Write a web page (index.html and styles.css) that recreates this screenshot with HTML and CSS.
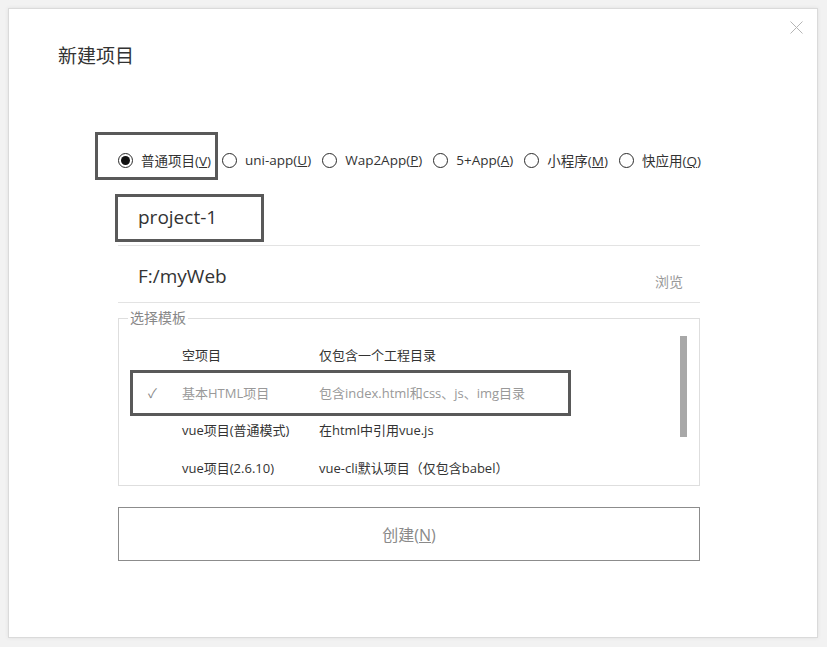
FILE: index.html
```html
<!DOCTYPE html>
<html lang="zh-CN">
<head>
  <meta charset="UTF-8">
  <meta name="viewport" content="width=device-width, initial-scale=1.0">
  <title>新建项目</title>
  <link rel="stylesheet" href="styles.css">
</head>
<body>
  <div class="dialog">
    <button class="close" type="button" aria-label="关闭">
      <svg width="13" height="13" viewBox="0 0 13 13">
        <path d="M0.5 0.5 L12.5 12.5 M12.5 0.5 L0.5 12.5" stroke="#b5b5b5" stroke-width="1" fill="none"/>
      </svg>
    </button>

    <h1 class="title">新建项目</h1>

    <div class="form">
      <div class="types">
        <label class="type marked"><span class="radio checked"></span><span>普通项目(<u>V</u>)</span></label>
        <label class="type"><span class="radio"></span><span>uni-app(<u>U</u>)</span></label>
        <label class="type"><span class="radio"></span><span>Wap2App(<u>P</u>)</span></label>
        <label class="type"><span class="radio"></span><span>5+App(<u>A</u>)</span></label>
        <label class="type"><span class="radio"></span><span>小程序(<u>M</u>)</span></label>
        <label class="type"><span class="radio"></span><span>快应用(<u>Q</u>)</span></label>
      </div>

      <div class="field name-field">
        <span class="field-value marked">project-1</span>
      </div>

      <div class="field path-field">
        <span class="field-value">F:/myWeb</span>
        <span class="browse">浏览</span>
      </div>

      <fieldset class="templates">
        <legend>选择模板</legend>
        <div class="template-body">
          <ul class="template-list">
            <li class="template">
              <span class="check"></span>
              <span class="tpl-name">空项目</span>
              <span class="tpl-desc">仅包含一个工程目录</span>
            </li>
            <li class="template selected marked">
              <span class="check">✓</span>
              <span class="tpl-name">基本HTML项目</span>
              <span class="tpl-desc">包含index.html和css、js、img目录</span>
            </li>
            <li class="template">
              <span class="check"></span>
              <span class="tpl-name">vue项目(普通模式)</span>
              <span class="tpl-desc">在html中引用vue.js</span>
            </li>
            <li class="template">
              <span class="check"></span>
              <span class="tpl-name">vue项目(2.6.10)</span>
              <span class="tpl-desc">vue-cli默认项目（仅包含babel）</span>
            </li>
          </ul>
          <div class="scrollbar"><div class="thumb"></div></div>
        </div>
      </fieldset>

      <button class="create" type="button">创建(<u>N</u>)</button>
    </div>
  </div>
</body>
</html>
```

FILE: styles.css
```css
*, *::before, *::after {
  box-sizing: border-box;
}
body {
  margin: 0;
  background-color: #f2f2f2;
  font-family: 'Open Sans', 'Noto Sans CJK SC', sans-serif;
  color: #333;
}
.dialog {
  position: relative;
  width: 810px;
  height: 630px;
  margin: 8px;
  background-color: #fff;
  border: 1px solid #dadada;
  box-shadow: 0 0 4px rgba(0, 0, 0, 0.08);
}
.close {
  position: absolute;
  top: 12px;
  right: 14px;
  width: 13px;
  height: 13px;
  padding: 0;
  border: none;
  background: none;
  line-height: 0;
}
.title {
  margin: 0;
  padding: 33px 0 0 49px;
  font-size: 19px;
  line-height: 28px;
  font-weight: 400;
  color: #333;
}
.form {
  width: 582px;
  margin-left: 109px;
}

/* marked boxes drawn over the content */
.marked {
  position: relative;
}
.marked::after {
  content: '';
  position: absolute;
  border: 3px solid #595959;
  pointer-events: none;
}

.types {
  display: flex;
  align-items: center;
  gap: 11px;
  margin-top: 80px;
  height: 20px;
  font-size: 13.5px;
}
.type {
  display: flex;
  align-items: center;
  gap: 8px;
  white-space: nowrap;
}
.type.marked::after {
  left: -23px;
  top: -18px;
  width: 123px;
  height: 48px;
}
.radio {
  width: 15px;
  height: 15px;
  border: 1px solid #2b2b2b;
  border-radius: 50%;
  display: flex;
  align-items: center;
  justify-content: center;
}
.radio.checked::before {
  content: '';
  width: 9px;
  height: 9px;
  border-radius: 50%;
  background-color: #111;
}

.field {
  display: flex;
  align-items: center;
  padding-left: 20px;
  border-bottom: 1px solid #e3e3e3;
  font-size: 19px;
}
.name-field {
  height: 51px;
  margin-top: 25px;
  padding-bottom: 6px;
}
.name-field .marked::after {
  left: -23px;
  top: -10px;
  width: 149px;
  height: 48px;
}
.path-field {
  height: 57px;
  justify-content: space-between;
  padding-right: 17px;
}
.path-field .field-value {
  margin-top: 4px;
}
.browse {
  font-size: 14px;
  color: #999;
  margin-top: 14px;
}

.templates {
  margin: 5px 0 0;
  padding: 0;
  border: 1px solid #dedede;
  height: 178px;
}
.templates legend {
  margin-left: 9px;
  padding: 0 2px;
  font-size: 14px;
  line-height: 20px;
  color: #888;
}
.template-body {
  display: flex;
  padding-top: 8px;
}
.template-list {
  flex: 1;
  margin: 0;
  padding: 0;
  list-style: none;
  font-size: 13px;
}
.template {
  display: grid;
  grid-template-columns: 34px 137px 1fr;
  align-items: center;
  height: 37.5px;
  padding-left: 29px;
  white-space: nowrap;
}
.template.selected {
  color: #999;
}
.template.marked::after {
  left: 11px;
  top: -4px;
  width: 441px;
  height: 46px;
}
.check {
  color: #888;
  font-size: 13px;
}
.scrollbar {
  width: 7px;
  margin-right: 12px;
}
.thumb {
  height: 101px;
  background-color: #a8a8a8;
}

.create {
  display: block;
  width: 100%;
  height: 54px;
  margin-top: 21px;
  border: 1px solid #8c8c8c;
  background-color: #fff;
  font-family: inherit;
  font-size: 16px;
  color: #8a8a8a;
}
```
